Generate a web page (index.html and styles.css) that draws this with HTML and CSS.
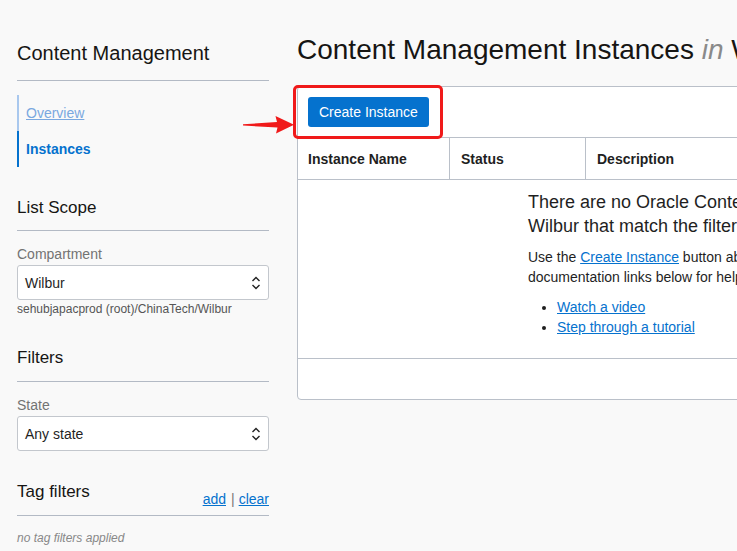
FILE: index.html
```html
<!DOCTYPE html>
<html lang="en">
<head>
<meta charset="utf-8">
<title>Content Management Instances</title>
<link rel="stylesheet" href="styles.css">
</head>
<body>
<div class="page">
  <aside class="sidebar">
    <h1 class="side-title">Content Management</h1>
    <nav class="side-nav">
      <a class="nav-item nav-overview" href="#">Overview</a>
      <a class="nav-item nav-active" href="#">Instances</a>
    </nav>

    <h2 class="side-heading">List Scope</h2>
    <div class="field">
      <label class="field-label">Compartment</label>
      <div class="select">
        <span>Wilbur</span>
        <svg class="chevrons" width="10" height="14" viewBox="0 0 10 14"><polyline points="1.5,5 5,1.5 8.5,5" fill="none" stroke="#222" stroke-width="1.4"/><polyline points="1.5,9 5,12.5 8.5,9" fill="none" stroke="#222" stroke-width="1.4"/></svg>
      </div>
      <div class="field-hint">sehubjapacprod (root)/ChinaTech/Wilbur</div>
    </div>

    <h2 class="side-heading heading-filters">Filters</h2>
    <div class="field">
      <label class="field-label">State</label>
      <div class="select">
        <span>Any state</span>
        <svg class="chevrons" width="10" height="14" viewBox="0 0 10 14"><polyline points="1.5,5 5,1.5 8.5,5" fill="none" stroke="#222" stroke-width="1.4"/><polyline points="1.5,9 5,12.5 8.5,9" fill="none" stroke="#222" stroke-width="1.4"/></svg>
      </div>
    </div>

    <div class="side-heading tag-row">
      <span>Tag filters</span>
      <span class="tag-actions"><a href="#">add</a><span class="sep">|</span><a href="#">clear</a></span>
    </div>
    <div class="no-tags">no tag filters applied</div>
  </aside>

  <main class="main">
    <h1 class="main-title">Content Management Instances <i class="in">in</i> Wilbur Compartment</h1>
    <section class="panel">
      <div class="toolbar">
        <button class="btn-primary">Create Instance</button>
      </div>
      <div class="thead">
        <div class="th th-name">Instance Name</div>
        <div class="th th-status">Status</div>
        <div class="th th-desc">Description</div>
      </div>
      <div class="empty">
        <p class="empty-title">There are no Oracle Content Management Instances in<br>Wilbur that match the filters.</p>
        <p class="empty-text">Use the <a href="#">Create Instance</a> button above to create an instance, or use the<br>documentation links below for help getting started.</p>
        <ul class="empty-links">
          <li><a href="#">Watch a video</a></li>
          <li><a href="#">Step through a tutorial</a></li>
        </ul>
      </div>
      <div class="tfoot"></div>
    </section>

    <div class="highlight"></div>
    <svg class="arrow" width="52" height="20" viewBox="0 0 52 20"><polygon points="0,9.3 34,7 32.5,1 51,9.8 33,18.5 34.5,12.5 0,10.5" fill="#f01a1a"/></svg>
  </main>
</div>
</body>
</html>
```

FILE: styles.css
```css
html, body {
  margin: 0;
  padding: 0;
  overflow: hidden;
}

body {
  background: #f9f9f9;
  font-family: "Liberation Sans", Arial, sans-serif;
  color: #1f1f1f;
  width: 737px;
  height: 551px;
}

.page {
  display: flex;
  gap: 28px;
  padding-left: 17px;
}

/* Sidebar */
.sidebar {
  flex: 0 0 252px;
  width: 252px;
}

.side-title {
  margin: 41px 0 0;
  font-size: 20px;
  line-height: 24px;
  font-weight: normal;
  padding-bottom: 15px;
  border-bottom: 1px solid #b3bac5;
  color: #161513;
}

.side-nav {
  margin-top: 14px;
  display: flex;
  flex-direction: column;
}

.nav-item {
  display: block;
  height: 36px;
  line-height: 36px;
  padding-left: 7px;
  font-size: 14px;
  border-left: 2px solid #0572ce;
}

.nav-overview {
  color: #7aa8e0;
  text-decoration: underline;
  border-left-color: #a9c8ee;
}

.nav-active {
  color: #0572ce;
  font-weight: bold;
  text-decoration: none;
}

.side-heading {
  margin: 31px 0 0;
  font-size: 17px;
  line-height: 20px;
  font-weight: normal;
  padding-bottom: 12px;
  border-bottom: 1px solid #b3bac5;
  color: #161513;
}

.heading-filters {
  margin-top: 32px;
  padding-bottom: 13px;
}

.field {
  margin-top: 15px;
}

.field-label {
  display: block;
  font-size: 14px;
  line-height: 16px;
  color: #737373;
}

.select {
  margin-top: 3px;
  height: 33px;
  border: 1px solid #c3c7cd;
  border-radius: 3px;
  background: #fff;
  display: flex;
  align-items: center;
  justify-content: space-between;
  padding: 0 7px 0 7px;
  font-size: 14px;
  color: #1f1f1f;
}

.chevrons {
  display: block;
}

.field-hint {
  margin-top: 2px;
  font-size: 12px;
  line-height: 14px;
  color: #555;
}

.tag-row {
  margin-top: 31px;
  display: flex;
  justify-content: space-between;
  align-items: flex-end;
  padding-bottom: 13px;
}

.tag-actions {
  font-size: 14px;
  line-height: 14px;
  position: relative;
  top: 4px;
}

.tag-actions a {
  color: #0572ce;
  text-decoration: underline;
}

.tag-actions .sep {
  color: #777;
  margin: 0 4px 0 5px;
  font-size: 14px;
}

.no-tags {
  margin-top: 15px;
  font-size: 12px;
  line-height: 14px;
  font-style: italic;
  color: #888;
}

/* Main */
.main {
  position: relative;
  flex: 0 0 auto;
  width: 900px;
}

.main-title {
  margin: 34px 0 0;
  font-size: 28px;
  line-height: 32px;
  font-weight: normal;
  white-space: nowrap;
  color: #161513;
}

.main-title .in {
  color: #8a8a8a;
}

.panel {
  margin-top: 20px;
  background: #fff;
  border: 1px solid #bac0c9;
  border-radius: 4px;
}

.toolbar {
  height: 50px;
  padding-left: 10px;
  display: flex;
  align-items: center;
}

.btn-primary {
  height: 30px;
  padding: 0 11px;
  border: 0;
  border-radius: 3px;
  background: #0572ce;
  color: #fff;
  font-family: "Liberation Sans", Arial, sans-serif;
  font-size: 14px;
}

.thead {
  display: flex;
  height: 41px;
  border-top: 1px solid #bac0c9;
  border-bottom: 1px solid #bac0c9;
}

.th {
  display: flex;
  align-items: center;
  padding-left: 11px;
  font-size: 14px;
  font-weight: bold;
  color: #1f1f1f;
}

.th-name {
  width: 141px;
  padding-left: 10px;
  border-right: 1px solid #bac0c9;
}

.th-status {
  width: 124px;
  border-right: 1px solid #bac0c9;
}

.th-desc {
  flex: 1;
}

.empty {
  padding: 10px 0 21px 230px;
  border-bottom: 1px solid #bac0c9;
}

.empty p {
  margin: 0;
}

.empty-title {
  font-size: 18px;
  line-height: 24px;
  color: #1f1f1f;
}

.empty-text {
  margin-top: 9px !important;
  font-size: 14px;
  line-height: 20px;
  color: #1f1f1f;
}

.empty a {
  color: #0572ce;
  text-decoration: underline;
}

.empty-links {
  margin: 10px 0 0;
  padding-left: 29px;
  font-size: 14px;
  line-height: 20px;
}

.tfoot {
  height: 40px;
}

.highlight {
  position: absolute;
  left: -4px;
  top: 85px;
  width: 144px;
  height: 48px;
  border: 3px solid #f01a1a;
  border-radius: 5px;
}

.arrow {
  position: absolute;
  left: -54px;
  top: 115px;
}
```
